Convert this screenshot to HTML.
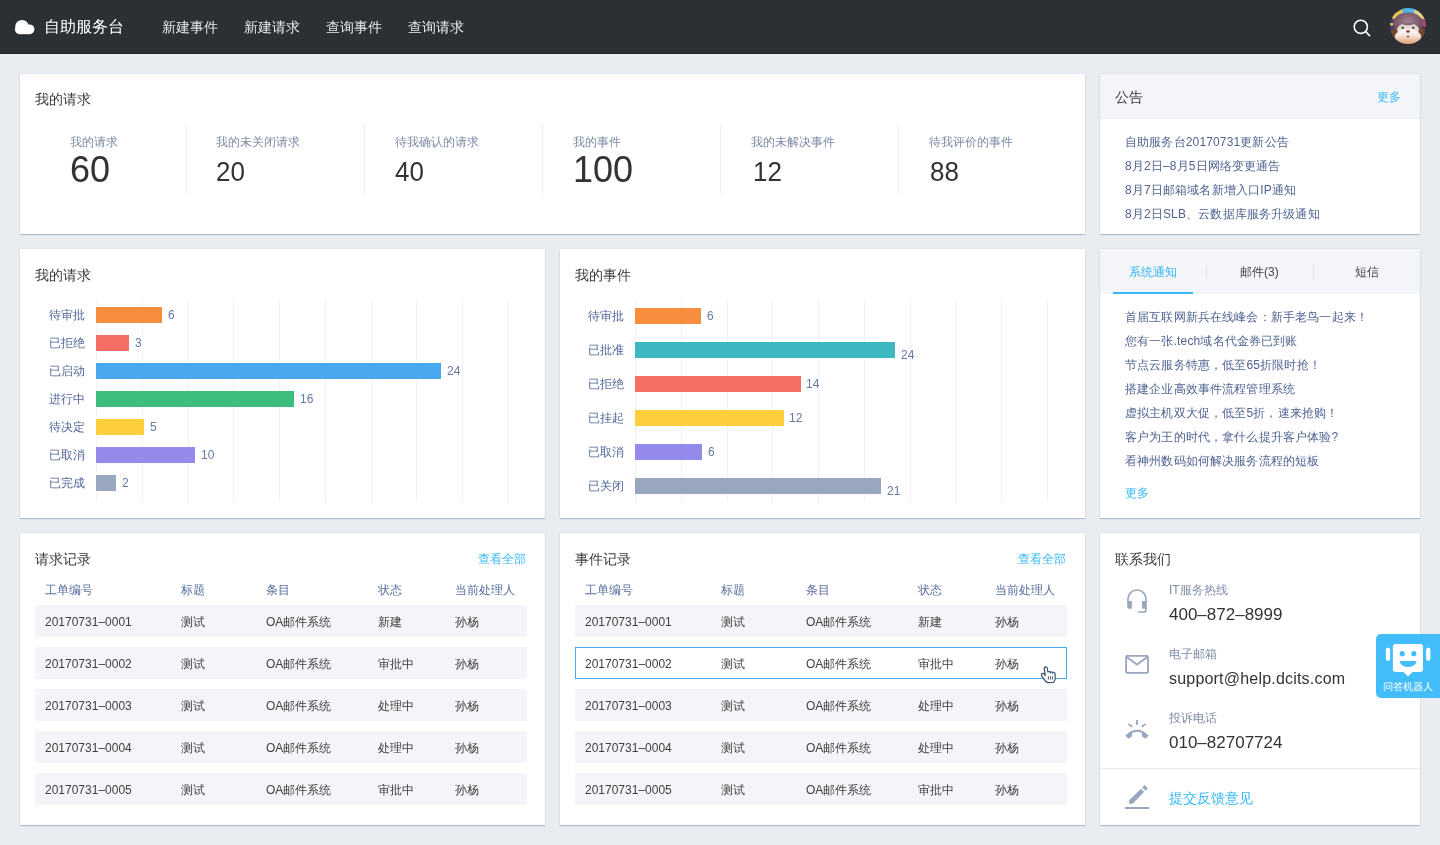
<!DOCTYPE html>
<html><head><meta charset="utf-8">
<style>
*{margin:0;padding:0;box-sizing:border-box}
html,body{width:1440px;height:845px;overflow:hidden}
body{background:#e9ecf1;font-family:"Liberation Sans",sans-serif;position:relative;color:#333}
.a{position:absolute;white-space:nowrap;line-height:1}
body{-webkit-font-smoothing:antialiased}
.card,.hdr{will-change:transform}
.hdr{position:absolute;left:0;top:0;width:1440px;height:54px;background:#2c3034;border-bottom:1px solid #1f2226}
.card{position:absolute;background:#fff;box-shadow:0 1px 1px rgba(120,132,158,.45),0 0 1px rgba(120,132,158,.35)}
.ttl{font-size:14px;color:#3a3a3a}
.lbl{font-size:12px;color:#7d8ba6}
.num{color:#333}
.dv{position:absolute;width:1px;background:#eceef2}
.nt{font-size:12px;color:#506391;letter-spacing:0.15px}
.lnk{color:#35b8f8}
.grid{position:absolute;width:1px;background:#f0f1f4}
.bar{position:absolute;height:16px}
.cl{font-size:12px;color:#51669a}
.cv{font-size:12px;color:#6478a3}
.th{font-size:12px;color:#5a6f9e}
.row{position:absolute;height:32px;background:#f4f5f9}
.td{font-size:12px;color:#404040}
</style></head>
<body>
<div class="hdr">
  <svg class="a" style="left:10px;top:10px" width="30" height="30" viewBox="0 0 30 30"><g fill="#fff"><circle cx="12" cy="16.6" r="6.7"/><circle cx="19.5" cy="19.3" r="4.9"/><circle cx="9.6" cy="19.5" r="4.7"/><rect x="9.6" y="17" width="10" height="7.2"/></g></svg>
  <div class="a" style="left:44px;top:19px;font-size:16px;color:#fff">自助服务台</div>
  <div class="a" style="left:162px;top:20px;font-size:14px;color:#e8e8e8">新建事件</div>
  <div class="a" style="left:244px;top:20px;font-size:14px;color:#e8e8e8">新建请求</div>
  <div class="a" style="left:326px;top:20px;font-size:14px;color:#e8e8e8">查询事件</div>
  <div class="a" style="left:408px;top:20px;font-size:14px;color:#e8e8e8">查询请求</div>
  <svg class="a" style="left:1352px;top:17.5px" width="20" height="20" viewBox="0 0 20 20"><circle cx="8.8" cy="8.8" r="6.6" fill="none" stroke="#fff" stroke-width="1.6"/><path d="M13.6 13.6 L17.6 17.6" stroke="#fff" stroke-width="1.6" stroke-linecap="round"/></svg>
  <svg class="a" style="left:1390px;top:8px" width="36" height="36" viewBox="0 0 36 36">
    <defs>
      <clipPath id="avc"><circle cx="18" cy="18" r="18"/></clipPath>
      <linearGradient id="muz" x1="0" y1="0" x2="0" y2="1"><stop offset="0" stop-color="#ffffff"/><stop offset=".45" stop-color="#f6e2d6"/><stop offset="1" stop-color="#d99a6c"/></linearGradient>
      <radialGradient id="hair" cx=".5" cy=".4" r=".6"><stop offset="0" stop-color="#a08292"/><stop offset="1" stop-color="#6a4652"/></radialGradient>
    </defs>
    <g clip-path="url(#avc)">
      <rect x="0" y="0" width="36" height="36" fill="#4a3440"/>
      <rect x="12" y="0" width="13" height="8" fill="#52b2e2"/>
      <path d="M2 7 L12 1 L14 10 L3 15 Z" fill="#e2c455"/>
      <path d="M24 1 L33 5 L35 12 L25 9 Z" fill="#e2d488"/>
      <path d="M30 10 L36 12 L36 19 L31 18 Z" fill="#a8447c"/>
      <path d="M0 12 L4 11 L4 22 L0 22 Z" fill="#3c3a72"/>
      <rect x="0" y="15" width="3" height="2.5" fill="#e8d040"/>
      <ellipse cx="18" cy="26.5" rx="17.5" ry="11.5" fill="#74462e"/>
      <ellipse cx="18" cy="15.5" rx="15" ry="11" fill="url(#hair)"/>
      <ellipse cx="18" cy="21.5" rx="11" ry="6.5" fill="#ead8d6"/>
      <path d="M11 15.5 Q18 19.5 25 15.5 Q18 14 11 15.5 Z" fill="#8a6a78"/>
      <ellipse cx="12.6" cy="19.6" rx="1.8" ry="1.5" fill="#9aa890"/>
      <ellipse cx="23.4" cy="19.6" rx="1.8" ry="1.5" fill="#9aa890"/>
      <circle cx="12.9" cy="19.8" r=".85" fill="#2a2a20"/>
      <circle cx="23.1" cy="19.8" r=".85" fill="#2a2a20"/>
      <ellipse cx="18" cy="28.8" rx="13.2" ry="7.6" fill="url(#muz)"/>
      <ellipse cx="18" cy="23.5" rx="1.9" ry="1.2" fill="#8a3a32"/>
      <ellipse cx="18" cy="28.6" rx="1.6" ry=".8" fill="#c2463e"/>
    </g>
  </svg>
</div>

<!-- stats card -->
<div class="card" style="left:20px;top:74px;width:1065px;height:160px">
  <div class="a ttl" style="left:15px;top:18px">我的请求</div>
  <div class="dv" style="left:166px;top:50px;height:70px"></div>
  <div class="dv" style="left:344px;top:50px;height:70px"></div>
  <div class="dv" style="left:522px;top:50px;height:70px"></div>
  <div class="dv" style="left:700px;top:50px;height:70px"></div>
  <div class="dv" style="left:878px;top:50px;height:70px"></div>
  <div class="a lbl" style="left:50px;top:62px">我的请求</div>
  <div class="a lbl" style="left:196px;top:62px">我的未关闭请求</div>
  <div class="a lbl" style="left:375px;top:62px">待我确认的请求</div>
  <div class="a lbl" style="left:553px;top:62px">我的事件</div>
  <div class="a lbl" style="left:731px;top:62px">我的未解决事件</div>
  <div class="a lbl" style="left:909px;top:62px">待我评价的事件</div>
  <div class="a num" style="left:50px;top:78px;font-size:36px">60</div>
  <div class="a num" style="left:196px;top:85px;font-size:26px;transform:scaleY(1.06);transform-origin:0 22px">20</div>
  <div class="a num" style="left:375px;top:85px;font-size:26px;transform:scaleY(1.06);transform-origin:0 22px">40</div>
  <div class="a num" style="left:553px;top:78px;font-size:36px">100</div>
  <div class="a num" style="left:733px;top:85px;font-size:26px;transform:scaleY(1.06);transform-origin:0 22px">12</div>
  <div class="a num" style="left:910px;top:85px;font-size:26px;transform:scaleY(1.06);transform-origin:0 22px">88</div>
</div>

<!-- notice card -->
<div class="card" style="left:1100px;top:74px;width:320px;height:160px">
  <div class="a" style="left:0;top:0;width:320px;height:45px;background:#f3f5f9"></div>
  <div class="a ttl" style="left:15px;top:16px">公告</div>
  <div class="a lnk" style="left:277px;top:17px;font-size:12px">更多</div>
  <div class="a nt" style="left:25px;top:62px">自助服务台20170731更新公告</div>
  <div class="a nt" style="left:25px;top:86px">8月2日–8月5日网络变更通告</div>
  <div class="a nt" style="left:25px;top:110px">8月7日邮箱域名新增入口IP通知</div>
  <div class="a nt" style="left:25px;top:134px">8月2日SLB、云数据库服务升级通知</div>
</div>

<!-- chart 1 -->
<div class="card" style="left:20px;top:249px;width:525px;height:269px">
  <div class="a ttl" style="left:15px;top:19px">我的请求</div>
  <div class="grid" style="left:76px;top:50px;height:203px"></div>
  <div class="grid" style="left:122px;top:50px;height:203px"></div>
  <div class="grid" style="left:168px;top:50px;height:203px"></div>
  <div class="grid" style="left:213px;top:50px;height:203px"></div>
  <div class="grid" style="left:259px;top:50px;height:203px"></div>
  <div class="grid" style="left:305px;top:50px;height:203px"></div>
  <div class="grid" style="left:351px;top:50px;height:203px"></div>
  <div class="grid" style="left:396px;top:50px;height:203px"></div>
  <div class="grid" style="left:442px;top:50px;height:203px"></div>
  <div class="grid" style="left:488px;top:50px;height:203px"></div>
  <div class="a cl" style="left:29px;top:60px">待审批</div>
  <div class="bar" style="left:76px;top:58px;width:66px;background:#f78e3d"></div>
  <div class="a cv" style="left:148px;top:60px">6</div>
  <div class="a cl" style="left:29px;top:88px">已拒绝</div>
  <div class="bar" style="left:76px;top:86px;width:33px;background:#f46e65"></div>
  <div class="a cv" style="left:115px;top:88px">3</div>
  <div class="a cl" style="left:29px;top:116px">已启动</div>
  <div class="bar" style="left:76px;top:114px;width:345px;background:#49a9ee"></div>
  <div class="a cv" style="left:427px;top:116px">24</div>
  <div class="a cl" style="left:29px;top:144px">进行中</div>
  <div class="bar" style="left:76px;top:142px;width:198px;background:#3dbd7d"></div>
  <div class="a cv" style="left:280px;top:144px">16</div>
  <div class="a cl" style="left:29px;top:172px">待决定</div>
  <div class="bar" style="left:76px;top:170px;width:48px;background:#ffce3d"></div>
  <div class="a cv" style="left:130px;top:172px">5</div>
  <div class="a cl" style="left:29px;top:200px">已取消</div>
  <div class="bar" style="left:76px;top:198px;width:99px;background:#948aec"></div>
  <div class="a cv" style="left:181px;top:200px">10</div>
  <div class="a cl" style="left:29px;top:228px">已完成</div>
  <div class="bar" style="left:76px;top:226px;width:20px;background:#98a6be"></div>
  <div class="a cv" style="left:102px;top:228px">2</div>
</div>
<!-- chart 2 -->
<div class="card" style="left:560px;top:249px;width:525px;height:269px">
  <div class="a ttl" style="left:15px;top:19px">我的事件</div>
  <div class="grid" style="left:75px;top:50px;height:203px"></div>
  <div class="grid" style="left:121px;top:50px;height:203px"></div>
  <div class="grid" style="left:167px;top:50px;height:203px"></div>
  <div class="grid" style="left:212px;top:50px;height:203px"></div>
  <div class="grid" style="left:258px;top:50px;height:203px"></div>
  <div class="grid" style="left:304px;top:50px;height:203px"></div>
  <div class="grid" style="left:350px;top:50px;height:203px"></div>
  <div class="grid" style="left:395px;top:50px;height:203px"></div>
  <div class="grid" style="left:441px;top:50px;height:203px"></div>
  <div class="grid" style="left:487px;top:50px;height:203px"></div>
  <div class="a cl" style="left:28px;top:61px">待审批</div>
  <div class="bar" style="left:75px;top:59px;width:66px;background:#f78e3d"></div>
  <div class="a cv" style="left:147px;top:61px">6</div>
  <div class="a cl" style="left:28px;top:95px">已批准</div>
  <div class="bar" style="left:75px;top:93px;width:260px;background:#3db8c1"></div>
  <div class="a cv" style="left:341px;top:100px">24</div>
  <div class="a cl" style="left:28px;top:129px">已拒绝</div>
  <div class="bar" style="left:75px;top:127px;width:166px;background:#f46e65"></div>
  <div class="a cv" style="left:246px;top:129px">14</div>
  <div class="a cl" style="left:28px;top:163px">已挂起</div>
  <div class="bar" style="left:75px;top:161px;width:149px;background:#ffce3d"></div>
  <div class="a cv" style="left:229px;top:163px">12</div>
  <div class="a cl" style="left:28px;top:197px">已取消</div>
  <div class="bar" style="left:75px;top:195px;width:67px;background:#948aec"></div>
  <div class="a cv" style="left:148px;top:197px">6</div>
  <div class="a cl" style="left:28px;top:231px">已关闭</div>
  <div class="bar" style="left:75px;top:229px;width:246px;background:#98a6be"></div>
  <div class="a cv" style="left:327px;top:236px">21</div>
</div>
<!-- notif -->
<div class="card" style="left:1100px;top:249px;width:320px;height:269px">
  <div class="a" style="left:0;top:0;width:320px;height:45px;background:#f3f5f9"></div>
  <div class="a lnk" style="left:29px;top:17px;font-size:12px">系统通知</div>
  <div class="a" style="left:140px;top:17px;font-size:12px;color:#444">邮件(3)</div>
  <div class="a" style="left:255px;top:17px;font-size:12px;color:#444">短信</div>
  <div class="dv" style="left:106px;top:16px;height:14px;background:#dde0e6"></div>
  <div class="dv" style="left:213px;top:16px;height:14px;background:#dde0e6"></div>
  <div class="a" style="left:13px;top:43px;width:80px;height:2px;background:#35b8f8"></div>
  <div class="a nt" style="left:25px;top:62px">首届互联网新兵在线峰会：新手老鸟一起来！</div>
  <div class="a nt" style="left:25px;top:86px">您有一张.tech域名代金券已到账</div>
  <div class="a nt" style="left:25px;top:110px">节点云服务特惠，低至65折限时抢！</div>
  <div class="a nt" style="left:25px;top:134px">搭建企业高效事件流程管理系统</div>
  <div class="a nt" style="left:25px;top:158px">虚拟主机双大促，低至5折，速来抢购！</div>
  <div class="a nt" style="left:25px;top:182px">客户为王的时代，拿什么提升客户体验?</div>
  <div class="a nt" style="left:25px;top:206px">看神州数码如何解决服务流程的短板</div>
  <div class="a lnk" style="left:25px;top:238px;font-size:12px">更多</div>
</div>
<!-- table 0 -->
<div class="card" style="left:20px;top:533px;width:525px;height:292px">
  <div class="a ttl" style="left:15px;top:19px">请求记录</div>
  <div class="a lnk" style="left:458px;top:20px;font-size:12px">查看全部</div>
  <div class="a th" style="left:25px;top:51px">工单编号</div>
  <div class="a th" style="left:161px;top:51px">标题</div>
  <div class="a th" style="left:246px;top:51px">条目</div>
  <div class="a th" style="left:358px;top:51px">状态</div>
  <div class="a th" style="left:435px;top:51px">当前处理人</div>
  <div class="row" style="left:15px;top:72px;width:492px"></div>
  <div class="a td" style="left:25px;top:83px">20170731–0001</div>
  <div class="a td" style="left:161px;top:83px">测试</div>
  <div class="a td" style="left:246px;top:83px">OA邮件系统</div>
  <div class="a td" style="left:358px;top:83px">新建</div>
  <div class="a td" style="left:435px;top:83px">孙杨</div>
  <div class="row" style="left:15px;top:114px;width:492px"></div>
  <div class="a td" style="left:25px;top:125px">20170731–0002</div>
  <div class="a td" style="left:161px;top:125px">测试</div>
  <div class="a td" style="left:246px;top:125px">OA邮件系统</div>
  <div class="a td" style="left:358px;top:125px">审批中</div>
  <div class="a td" style="left:435px;top:125px">孙杨</div>
  <div class="row" style="left:15px;top:156px;width:492px"></div>
  <div class="a td" style="left:25px;top:167px">20170731–0003</div>
  <div class="a td" style="left:161px;top:167px">测试</div>
  <div class="a td" style="left:246px;top:167px">OA邮件系统</div>
  <div class="a td" style="left:358px;top:167px">处理中</div>
  <div class="a td" style="left:435px;top:167px">孙杨</div>
  <div class="row" style="left:15px;top:198px;width:492px"></div>
  <div class="a td" style="left:25px;top:209px">20170731–0004</div>
  <div class="a td" style="left:161px;top:209px">测试</div>
  <div class="a td" style="left:246px;top:209px">OA邮件系统</div>
  <div class="a td" style="left:358px;top:209px">处理中</div>
  <div class="a td" style="left:435px;top:209px">孙杨</div>
  <div class="row" style="left:15px;top:240px;width:492px"></div>
  <div class="a td" style="left:25px;top:251px">20170731–0005</div>
  <div class="a td" style="left:161px;top:251px">测试</div>
  <div class="a td" style="left:246px;top:251px">OA邮件系统</div>
  <div class="a td" style="left:358px;top:251px">审批中</div>
  <div class="a td" style="left:435px;top:251px">孙杨</div>
</div>
<!-- table 1 -->
<div class="card" style="left:560px;top:533px;width:525px;height:292px">
  <div class="a ttl" style="left:15px;top:19px">事件记录</div>
  <div class="a lnk" style="left:458px;top:20px;font-size:12px">查看全部</div>
  <div class="a th" style="left:25px;top:51px">工单编号</div>
  <div class="a th" style="left:161px;top:51px">标题</div>
  <div class="a th" style="left:246px;top:51px">条目</div>
  <div class="a th" style="left:358px;top:51px">状态</div>
  <div class="a th" style="left:435px;top:51px">当前处理人</div>
  <div class="row" style="left:15px;top:72px;width:492px"></div>
  <div class="a td" style="left:25px;top:83px">20170731–0001</div>
  <div class="a td" style="left:161px;top:83px">测试</div>
  <div class="a td" style="left:246px;top:83px">OA邮件系统</div>
  <div class="a td" style="left:358px;top:83px">新建</div>
  <div class="a td" style="left:435px;top:83px">孙杨</div>
  <div class="row" style="left:15px;top:114px;width:492px;background:#fff;border:1px solid #49a9ee"></div>
  <div class="a td" style="left:25px;top:125px">20170731–0002</div>
  <div class="a td" style="left:161px;top:125px">测试</div>
  <div class="a td" style="left:246px;top:125px">OA邮件系统</div>
  <div class="a td" style="left:358px;top:125px">审批中</div>
  <div class="a td" style="left:435px;top:125px">孙杨</div>
  <div class="row" style="left:15px;top:156px;width:492px"></div>
  <div class="a td" style="left:25px;top:167px">20170731–0003</div>
  <div class="a td" style="left:161px;top:167px">测试</div>
  <div class="a td" style="left:246px;top:167px">OA邮件系统</div>
  <div class="a td" style="left:358px;top:167px">处理中</div>
  <div class="a td" style="left:435px;top:167px">孙杨</div>
  <div class="row" style="left:15px;top:198px;width:492px"></div>
  <div class="a td" style="left:25px;top:209px">20170731–0004</div>
  <div class="a td" style="left:161px;top:209px">测试</div>
  <div class="a td" style="left:246px;top:209px">OA邮件系统</div>
  <div class="a td" style="left:358px;top:209px">处理中</div>
  <div class="a td" style="left:435px;top:209px">孙杨</div>
  <div class="row" style="left:15px;top:240px;width:492px"></div>
  <div class="a td" style="left:25px;top:251px">20170731–0005</div>
  <div class="a td" style="left:161px;top:251px">测试</div>
  <div class="a td" style="left:246px;top:251px">OA邮件系统</div>
  <div class="a td" style="left:358px;top:251px">审批中</div>
  <div class="a td" style="left:435px;top:251px">孙杨</div>
</div>
<!-- contact card -->
<div class="card" style="left:1100px;top:533px;width:320px;height:292px">
  <div class="a ttl" style="left:15px;top:19px">联系我们</div>
  <svg class="a" style="left:20px;top:51px" width="34" height="34" viewBox="0 0 34 34">
    <path d="M8 18 V15 A9 9 0 0 1 26 15 V18" fill="none" stroke="#98a6be" stroke-width="1.7"/>
    <path d="M7.2 17 H11.9 V24.7 H9.2 A2 2 0 0 1 7.2 22.7 Z" fill="#98a6be"/>
    <path d="M22.1 17 H26.8 V24.7 H22.1 Z" fill="#98a6be"/>
    <path d="M25.95 24 V26 A2 2 0 0 1 23.95 28 H18.1" fill="none" stroke="#98a6be" stroke-width="1.7"/>
  </svg>
  <div class="a lbl" style="left:69px;top:51px">IT服务热线</div>
  <div class="a" style="left:69px;top:73px;font-size:17px;color:#333">400–872–8999</div>
  <svg class="a" style="left:20px;top:115px" width="34" height="34" viewBox="0 0 34 34">
    <rect x="6.1" y="7.9" width="21.9" height="17" rx="1.2" fill="none" stroke="#98a6be" stroke-width="1.8"/>
    <path d="M6.6 9 L17 16.6 L27.4 9" fill="none" stroke="#98a6be" stroke-width="1.8"/>
  </svg>
  <div class="a lbl" style="left:69px;top:115px">电子邮箱</div>
  <div class="a" style="left:69px;top:138px;font-size:16px;letter-spacing:0.2px;color:#333">support@help.dcits.com</div>
  <svg class="a" style="left:20px;top:179px" width="34" height="34" viewBox="0 0 34 34">
    <path d="M17 8 V12.9" stroke="#98a6be" stroke-width="1.8"/>
    <path d="M8.4 11.9 L12.3 14.8" stroke="#98a6be" stroke-width="1.8"/>
    <path d="M25.6 11.9 L21.7 14.8" stroke="#98a6be" stroke-width="1.8"/>
    <path d="M8 22.5 Q17 15 26 22.5" fill="none" stroke="#98a6be" stroke-width="2"/>
    <path d="M5.2 23.4 L10 20.2 L12.1 20.6 L12.1 24.3 L8.5 26.8 Z" fill="#98a6be"/>
    <path d="M28.8 23.4 L24 20.2 L21.9 20.6 L21.9 24.3 L25.5 26.8 Z" fill="#98a6be"/>
  </svg>
  <div class="a lbl" style="left:69px;top:179px">投诉电话</div>
  <div class="a" style="left:69px;top:201px;font-size:17px;color:#333">010–82707724</div>
  <div class="a" style="left:0;top:235px;width:320px;height:1px;background:#e8eaee"></div>
  <svg class="a" style="left:20px;top:247px" width="34" height="34" viewBox="0 0 34 34">
    <path d="M9.1 20.3 L21 8.7 L24.2 11.8 L12.7 23.7 L9.1 23.7 Z" fill="#98a6be"/>
    <path d="M22.2 7.5 L24.6 5 L28 8.3 L25.5 10.8 Z" fill="#98a6be"/>
    <rect x="5" y="27" width="24" height="2" fill="#98a6be"/>
  </svg>
  <div class="a lnk" style="left:69px;top:258px;font-size:14px">提交反馈意见</div>
</div>

<!-- robot widget -->
<div class="a" style="left:1376px;top:634px;width:64px;height:64px;background:#43bdfa;border-radius:5px 0 0 5px">
  <svg class="a" style="left:0;top:0" width="64" height="64" viewBox="0 0 64 64">
    <rect x="16.9" y="9.9" width="30.1" height="28" rx="2.6" fill="#fff"/>
    <path d="M27 37.6 L32 42.6 L37 37.6 Z" fill="#fff"/>
    <rect x="9.8" y="13.7" width="4.3" height="13.3" rx="2.15" fill="#fff"/>
    <rect x="50.1" y="13.7" width="4.3" height="13.3" rx="2.15" fill="#fff"/>
    <circle cx="26.2" cy="19.7" r="2.6" fill="#43bdfa"/>
    <circle cx="37.8" cy="19.7" r="2.6" fill="#43bdfa"/>
    <path d="M23.6 27 A8.5 6.1 0 0 0 40.6 27 Z" fill="#43bdfa"/>
  </svg>
  <div class="a" style="left:7px;top:48px;font-size:10px;color:#fff">问答机器人</div>
</div>

<!-- cursor -->
<svg class="a" style="left:1034px;top:660px" width="30" height="30" viewBox="0 0 30 30">
  <path d="M11.2 15.6 L10.2 7.9 Q10.4 6.8 11.6 6.8 Q12.8 6.9 13.2 8 L13.9 11.8 Q15 11.2 16.3 12 Q17.6 11.4 18.6 12.4 Q20 11.9 21 13.2 L21.3 18.5 Q21 20.8 19.4 22.4 L13.3 22.6 Q11.6 21.4 10.2 19.3 L7.4 15.6 Q7 14.3 8.1 13.5 Q9.5 13 10.4 14.2 Z" fill="#fff" stroke="#3b4d72" stroke-width="1.2" stroke-linejoin="round"/>
  <path d="M14.4 16.2 V19.5 M16.4 16.2 V19.5 M18.4 16.2 V19.5 M16.3 12 V13.8 M18.6 12.4 V13.8" stroke="#3b4d72" stroke-width="0.9"/>
</svg>
</body></html>
